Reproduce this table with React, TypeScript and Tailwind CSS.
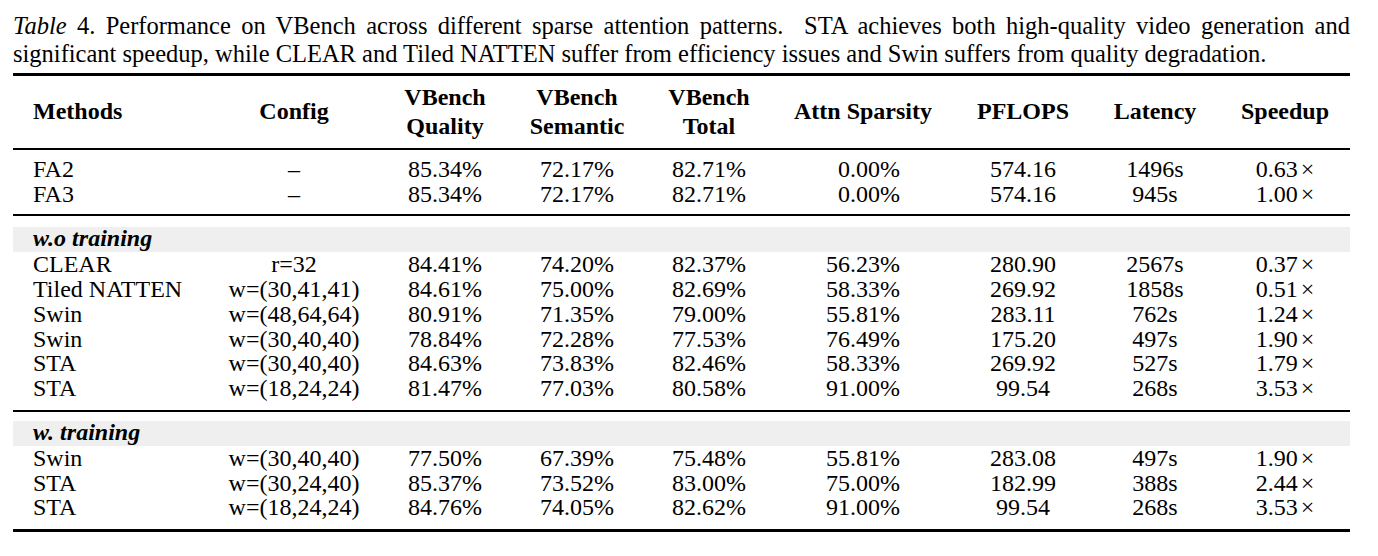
import React from 'react'

type Row = {
  method: string
  config: string
  quality: string
  semantic: string
  total: string
  sparsity: string
  pflops: string
  latency: string
  speedup: string
}

const baseRows: Row[] = [
  { method: 'FA2', config: '–', quality: '85.34%', semantic: '72.17%', total: '82.71%', sparsity: '0.00%', pflops: '574.16', latency: '1496s', speedup: '0.63' },
  { method: 'FA3', config: '–', quality: '85.34%', semantic: '72.17%', total: '82.71%', sparsity: '0.00%', pflops: '574.16', latency: '945s', speedup: '1.00' },
]

const noTrainRows: Row[] = [
  { method: 'CLEAR', config: 'r=32', quality: '84.41%', semantic: '74.20%', total: '82.37%', sparsity: '56.23%', pflops: '280.90', latency: '2567s', speedup: '0.37' },
  { method: 'Tiled NATTEN', config: 'w=(30,41,41)', quality: '84.61%', semantic: '75.00%', total: '82.69%', sparsity: '58.33%', pflops: '269.92', latency: '1858s', speedup: '0.51' },
  { method: 'Swin', config: 'w=(48,64,64)', quality: '80.91%', semantic: '71.35%', total: '79.00%', sparsity: '55.81%', pflops: '283.11', latency: '762s', speedup: '1.24' },
  { method: 'Swin', config: 'w=(30,40,40)', quality: '78.84%', semantic: '72.28%', total: '77.53%', sparsity: '76.49%', pflops: '175.20', latency: '497s', speedup: '1.90' },
  { method: 'STA', config: 'w=(30,40,40)', quality: '84.63%', semantic: '73.83%', total: '82.46%', sparsity: '58.33%', pflops: '269.92', latency: '527s', speedup: '1.79' },
  { method: 'STA', config: 'w=(18,24,24)', quality: '81.47%', semantic: '77.03%', total: '80.58%', sparsity: '91.00%', pflops: '99.54', latency: '268s', speedup: '3.53' },
]

const trainRows: Row[] = [
  { method: 'Swin', config: 'w=(30,40,40)', quality: '77.50%', semantic: '67.39%', total: '75.48%', sparsity: '55.81%', pflops: '283.08', latency: '497s', speedup: '1.90' },
  { method: 'STA', config: 'w=(30,24,40)', quality: '85.37%', semantic: '73.52%', total: '83.00%', sparsity: '75.00%', pflops: '182.99', latency: '388s', speedup: '2.44' },
  { method: 'STA', config: 'w=(18,24,24)', quality: '84.76%', semantic: '74.05%', total: '82.62%', sparsity: '91.00%', pflops: '99.54', latency: '268s', speedup: '3.53' },
]

// column widths chosen so each centred column lands on the same centre as the paper
const grid = 'grid grid-cols-[191px_180px_122px_142px_122px_186px_134px_130px_130px]'
const cell = 'flex justify-center items-center whitespace-nowrap'

function Cell({ children }: { children: React.ReactNode }) {
  return <div className={cell}>{children}</div>
}

function DataRow({ row }: { row: Row }) {
  const pad = row.sparsity.length < 6
  return (
    <div className={`${grid} h-[24.8px] items-center pb-[3px]`}>
      <div className="pl-[20px] whitespace-nowrap">{row.method}</div>
      <Cell>{row.config}</Cell>
      <Cell>{row.quality}</Cell>
      <Cell>{row.semantic}</Cell>
      <Cell>{row.total}</Cell>
      <Cell>
        {pad && <span className="invisible">0</span>}
        {row.sparsity}
      </Cell>
      <Cell>{row.pflops}</Cell>
      <Cell>{row.latency}</Cell>
      <Cell>
        {row.speedup}
        <span className="ml-[3px]">×</span>
      </Cell>
    </div>
  )
}

function Section({ label }: { label: string }) {
  return (
    <div className="h-[24.8px] bg-[#efefef] flex items-center pl-[20px] pb-[3px] font-bold italic">{label}</div>
  )
}

export default function App() {
  return (
    <div className="w-[1378px] h-[556px] bg-white text-black font-['Liberation_Serif',serif] text-[24px] overflow-hidden">
      <div className="pl-[13px] w-[1350px] pt-[12px] leading-[28.4px] text-[24.5px]">
        <div className="text-justify [text-align-last:justify] whitespace-pre">
          <span className="italic">Table</span> 4. Performance on VBench across different sparse attention patterns.{'  '}STA achieves both high-quality video generation and
        </div>
        <div>
          significant speedup, while CLEAR and Tiled NATTEN suffer from efficiency issues and Swin suffers from quality degradation.
        </div>
      </div>

      <div className="ml-[13px] w-[1337px] mt-[4px]">
        <div className="h-[3px] bg-black" />
        <div className={`${grid} h-[72px] items-center font-bold leading-[29px]`}>
          <div className="pl-[20px]">Methods</div>
          <Cell>Config</Cell>
          <div className="text-center">VBench<br />Quality</div>
          <div className="text-center">VBench<br />Semantic</div>
          <div className="text-center">VBench<br />Total</div>
          <Cell>Attn Sparsity</Cell>
          <Cell>PFLOPS</Cell>
          <Cell>Latency</Cell>
          <Cell>Speedup</Cell>
        </div>
        <div className="h-[2px] bg-black" />

        <div className="pt-[7.6px] pb-[7.4px] leading-none">
          {baseRows.map((r, i) => (
            <DataRow key={i} row={r} />
          ))}
        </div>
        <div className="h-[2px] bg-black" />

        <div className="pt-[11px] pb-[9px] leading-none">
          <Section label="w.o training" />
          {noTrainRows.map((r, i) => (
            <DataRow key={i} row={r} />
          ))}
        </div>
        <div className="h-[2px] bg-black" />

        <div className="pt-[9px] pb-[8.4px] leading-none">
          <Section label="w. training" />
          {trainRows.map((r, i) => (
            <DataRow key={i} row={r} />
          ))}
        </div>
        <div className="h-[3px] bg-black" />
      </div>
    </div>
  )
}
